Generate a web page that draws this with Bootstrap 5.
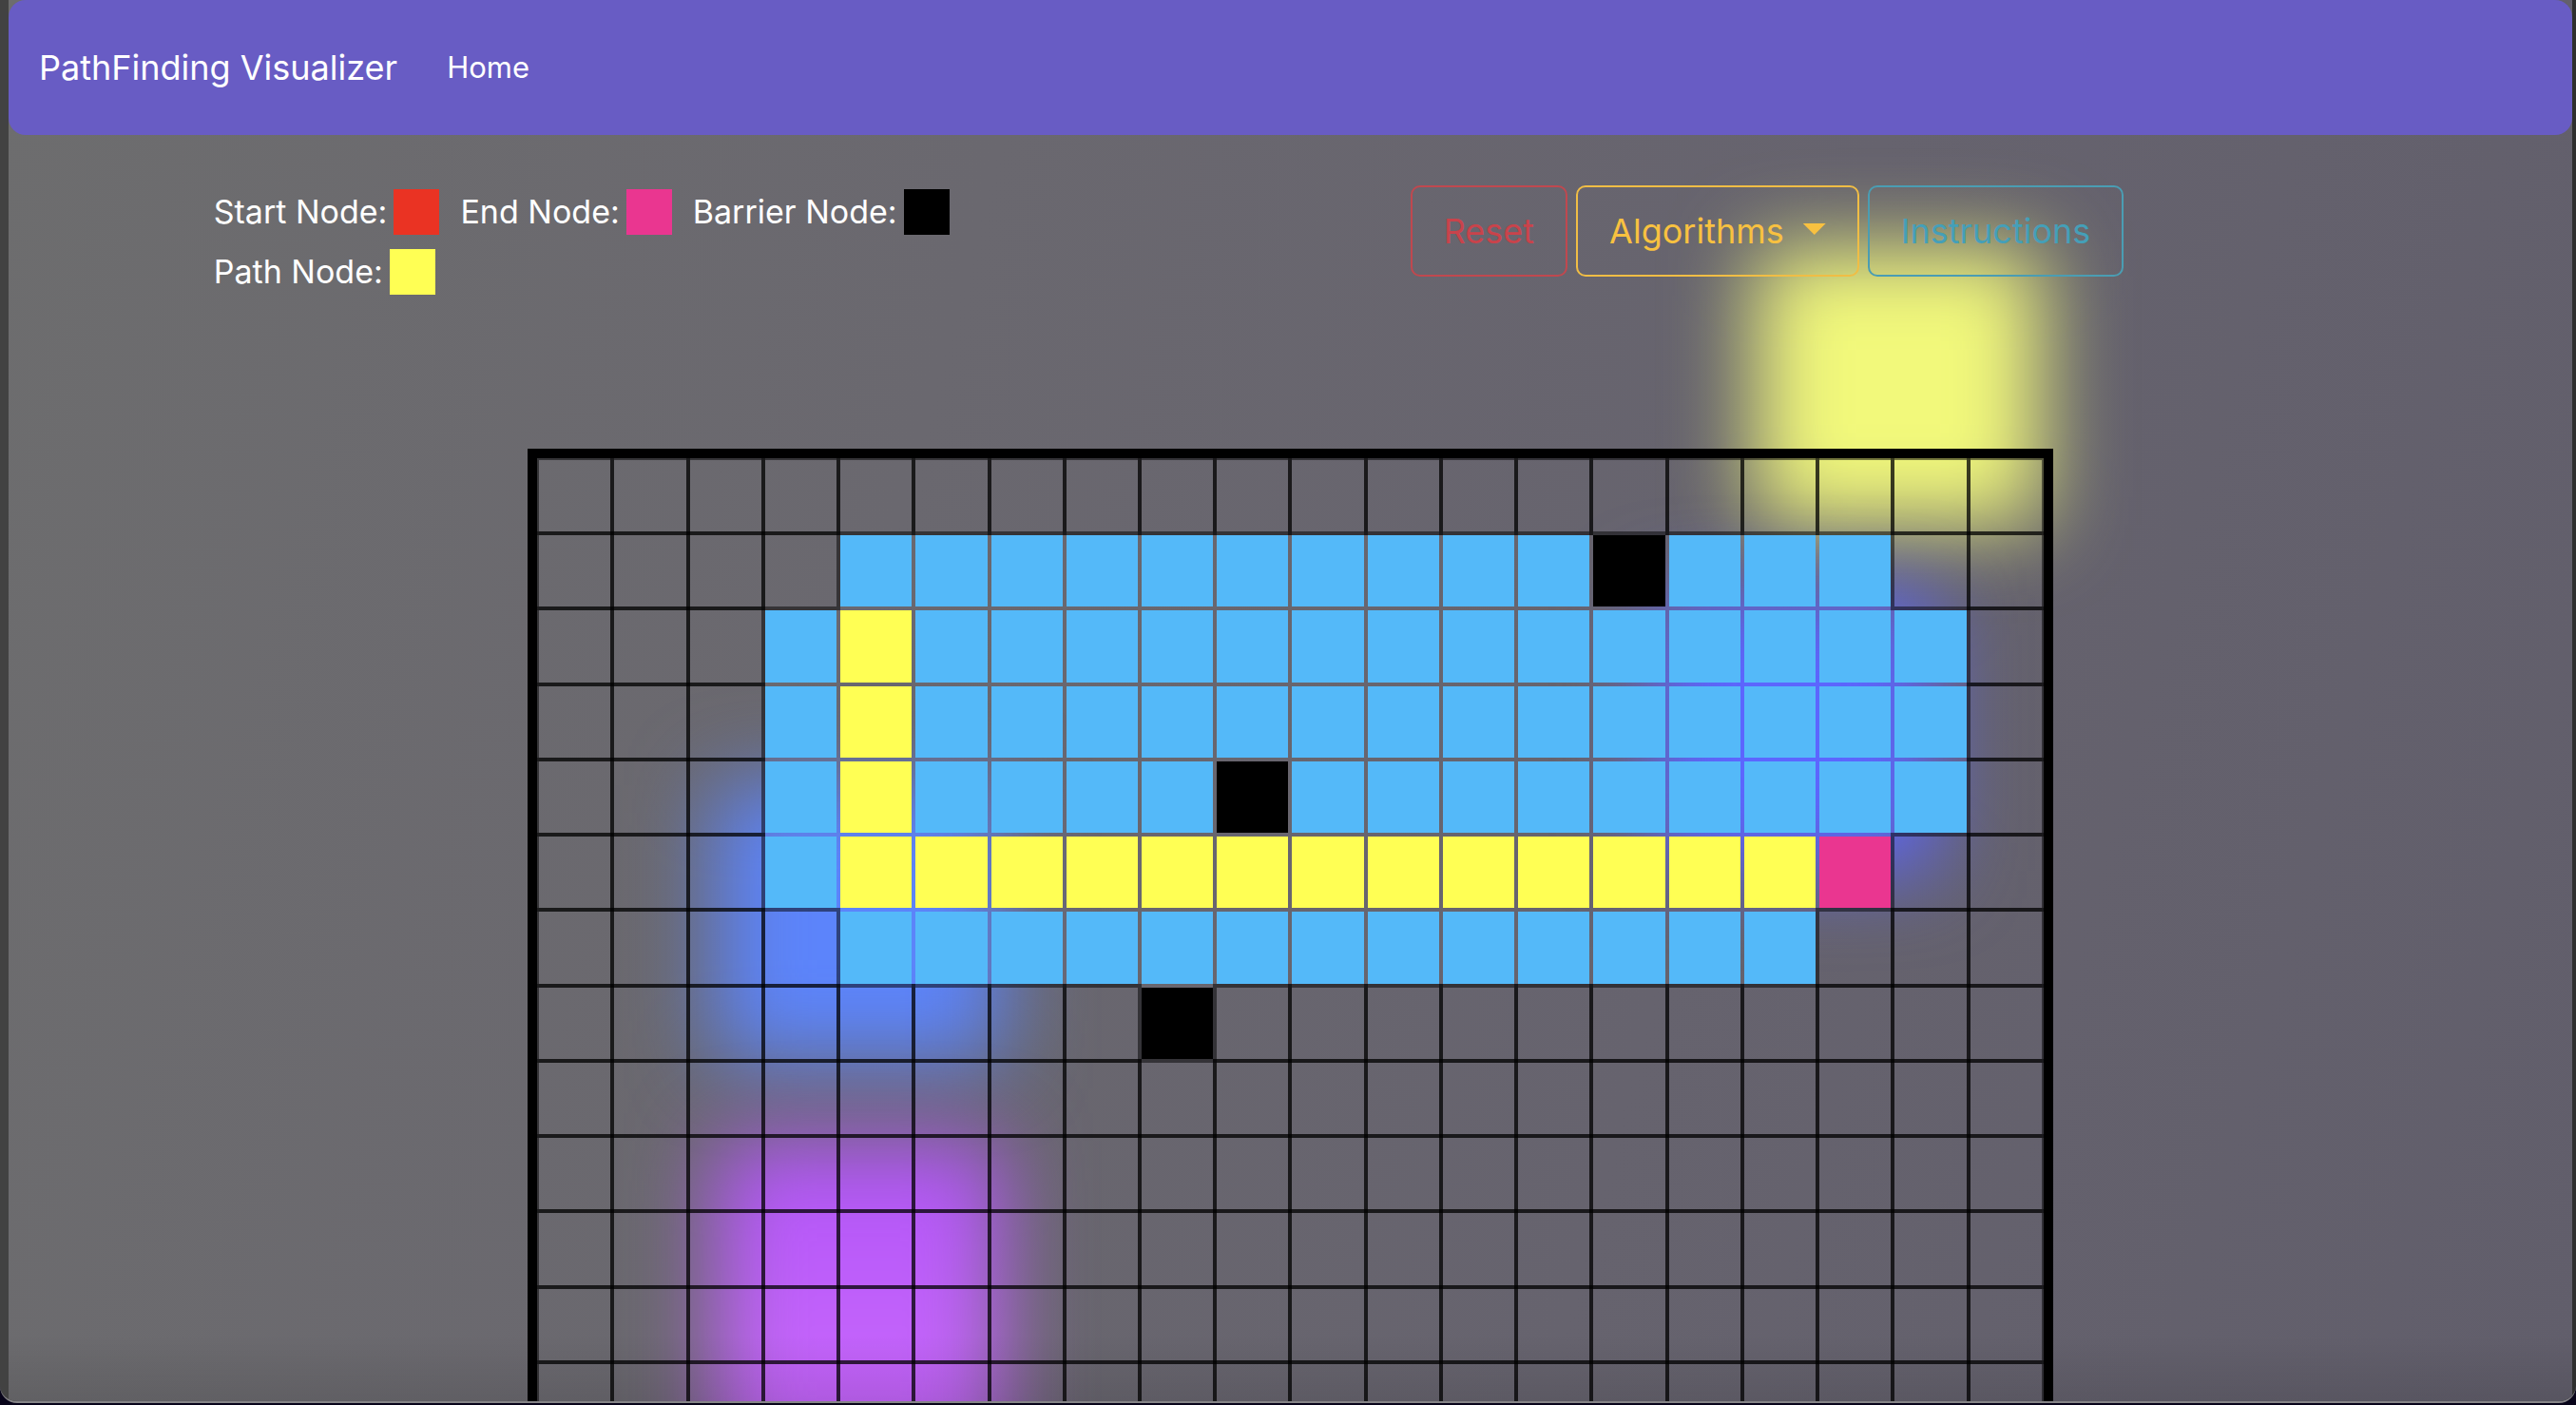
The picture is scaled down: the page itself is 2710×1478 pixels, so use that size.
<!DOCTYPE html>
<html lang="en">
<head>
<meta charset="utf-8">
<meta name="viewport" content="width=device-width, initial-scale=1">
<title>PathFinding Visualizer</title>
<link href="https://cdn.jsdelivr.net/npm/bootstrap@5.3.0/dist/css/bootstrap.min.css" rel="stylesheet">
<style>
  body {
    background: #08041a;
    font-family: Inter, "Liberation Sans", sans-serif;
    overflow: hidden;
  }
  /* window frame around the scrolled page */
  .app-window {
    height: calc(100vh - 2px);
    padding: 0 4px 0 9px;
    background: linear-gradient(90deg, #424242 50%, #2f2f2f 50%);
    border-bottom: 2px solid #858487;
    border-radius: 0 0 18px 18px;
    overflow: hidden;
  }
  .app-page {
    height: 100%;
    overflow: hidden;
    background: linear-gradient(105deg, #6d6d6e, #6a686f 35%, #66636e 65%, #615e6b);
  }
  .app-page::after {
    content: "";
    position: absolute;
    inset: auto 0 0 0;
    height: 70px;
    background: linear-gradient(rgba(0, 0, 0, 0), rgba(0, 0, 0, .1));
  }
  .app-nav {
    min-height: 142px;
    padding: 0 32px;
    background: #685cc4;
    border-radius: 18px;
    --bs-navbar-brand-font-size: 36px;
    --bs-navbar-brand-margin-end: 44px;
  }
  .app-nav .nav-link { font-size: 31px; padding: 0; }
  .tool-row { padding: 53px 8% 0; margin-bottom: 162px; }
  .legend {
    padding-top: 4px;
    font-size: 34px;
    line-height: 48px;
    column-gap: 22px;
    row-gap: 15px;
  }
  .legend-item { gap: 7px; }
  .swatch { width: 48px; height: 48px; }
  .tool-actions { gap: 9px; margin-left: 315px; }
  .tool-btn {
    --bs-btn-font-size: 36px;
    --bs-btn-line-height: 54px;
    --bs-btn-padding-x: 33px;
    --bs-btn-padding-y: 19px;
    --bs-btn-border-width: 2px;
    --bs-btn-border-radius: 10px;
  }
  .btn-reset { --bs-btn-color: #c9434b; --bs-btn-border-color: #c0484f; }
  .btn-algos { --bs-btn-color: #f8c140; --bs-btn-border-color: #f0bd45; }
  .btn-help { --bs-btn-color: #459fb8; --bs-btn-border-color: #4a9db3; }
  .caret {
    width: 24px;
    height: 12px;
    margin-left: 20px;
    margin-top: -4px;
    background: currentColor;
    clip-path: polygon(0 0, 100% 0, 50% 100%);
  }

  .board {
    width: 59.5%;
    border: 10px solid #000;
    display: grid;
    grid-template-columns: repeat(20, 1fr);
  }
  .cell { aspect-ratio: 1; padding: 2px; background-clip: content-box; }
  .cell-open { outline: 4px solid rgba(0, 0, 0, .5); outline-offset: -2px; }
  .c-start { background-color: #ea3323; }
  .c-end { background-color: #ea3690; }
  .c-wall { background-color: #000; }
  .c-path { background-color: #ffff54; }
  .c-seen { background-color: #54b9f9; }

  .glow { position: absolute; width: 300px; height: 290px; filter: blur(44px); }
  .glow-yellow { left: 1838px; top: 262px; background: #f2f97b; }
  .glow-indigo { left: 1726px; top: 626px; background: #5c66ff; }
  .glow-blue { left: 744px; top: 826px; background: #5c84fb; }
  .glow-violet { left: 744px; top: 1200px; height: 360px; background: linear-gradient(#b053f8, #c464fb 60%); }
</style>
</head>
<body>
<div class="app-window">
  <div class="app-page position-relative">
    <div class="glow glow-yellow"></div>
    <div class="glow glow-indigo"></div>
    <div class="glow glow-blue"></div>
    <div class="glow glow-violet"></div>

    <nav class="navbar navbar-expand navbar-dark app-nav position-relative">
      <a class="navbar-brand text-white" href="#">PathFinding Visualizer</a>
      <ul class="navbar-nav">
        <li class="nav-item"><a class="nav-link text-white" href="#">Home</a></li>
      </ul>
    </nav>

    <main class="position-relative">
      <div class="tool-row d-flex align-items-start">
        <div class="legend col-5 d-flex flex-wrap text-white">
          <div class="legend-item d-flex"><span>Start Node:</span><span class="swatch c-start"></span></div>
          <div class="legend-item d-flex"><span>End Node:</span><span class="swatch c-end"></span></div>
          <div class="legend-item d-flex"><span>Barrier Node:</span><span class="swatch c-wall"></span></div>
          <div class="legend-item d-flex"><span>Path Node:</span><span class="swatch c-path"></span></div>
        </div>
        <div class="tool-actions d-flex">
          <button type="button" class="btn tool-btn btn-reset">Reset</button>
          <button type="button" class="btn tool-btn btn-algos d-flex align-items-center">Algorithms<span class="caret"></span></button>
          <button type="button" class="btn tool-btn btn-help">Instructions</button>
        </div>
      </div>
      <div class="board mx-auto" id="board"></div>
    </main>
  </div>
</div>
<script src="https://cdn.jsdelivr.net/npm/bootstrap@5.3.0/dist/js/bootstrap.bundle.min.js"></script>
<script>
  // o = visited, y = path, w = barrier, e = end node, . = open
  const rows = [
    '....................',
    '....oooooooooowooo..',
    '...oyoooooooooooooo.',
    '...oyoooooooooooooo.',
    '...oyoooowooooooooo.',
    '...oyyyyyyyyyyyyye..',
    '....ooooooooooooo...',
    '........w...........'
  ];
  const kinds = { o: 'c-seen', y: 'c-path', w: 'c-wall', e: 'c-end', '.': 'cell-open' };
  const board = document.getElementById('board');
  for (let r = 0; r < 20; r++) {
    for (const mark of rows[r] || rows[0]) {
      const cell = document.createElement('div');
      cell.className = 'cell ' + kinds[mark];
      board.appendChild(cell);
    }
  }
</script>
</body>
</html>
